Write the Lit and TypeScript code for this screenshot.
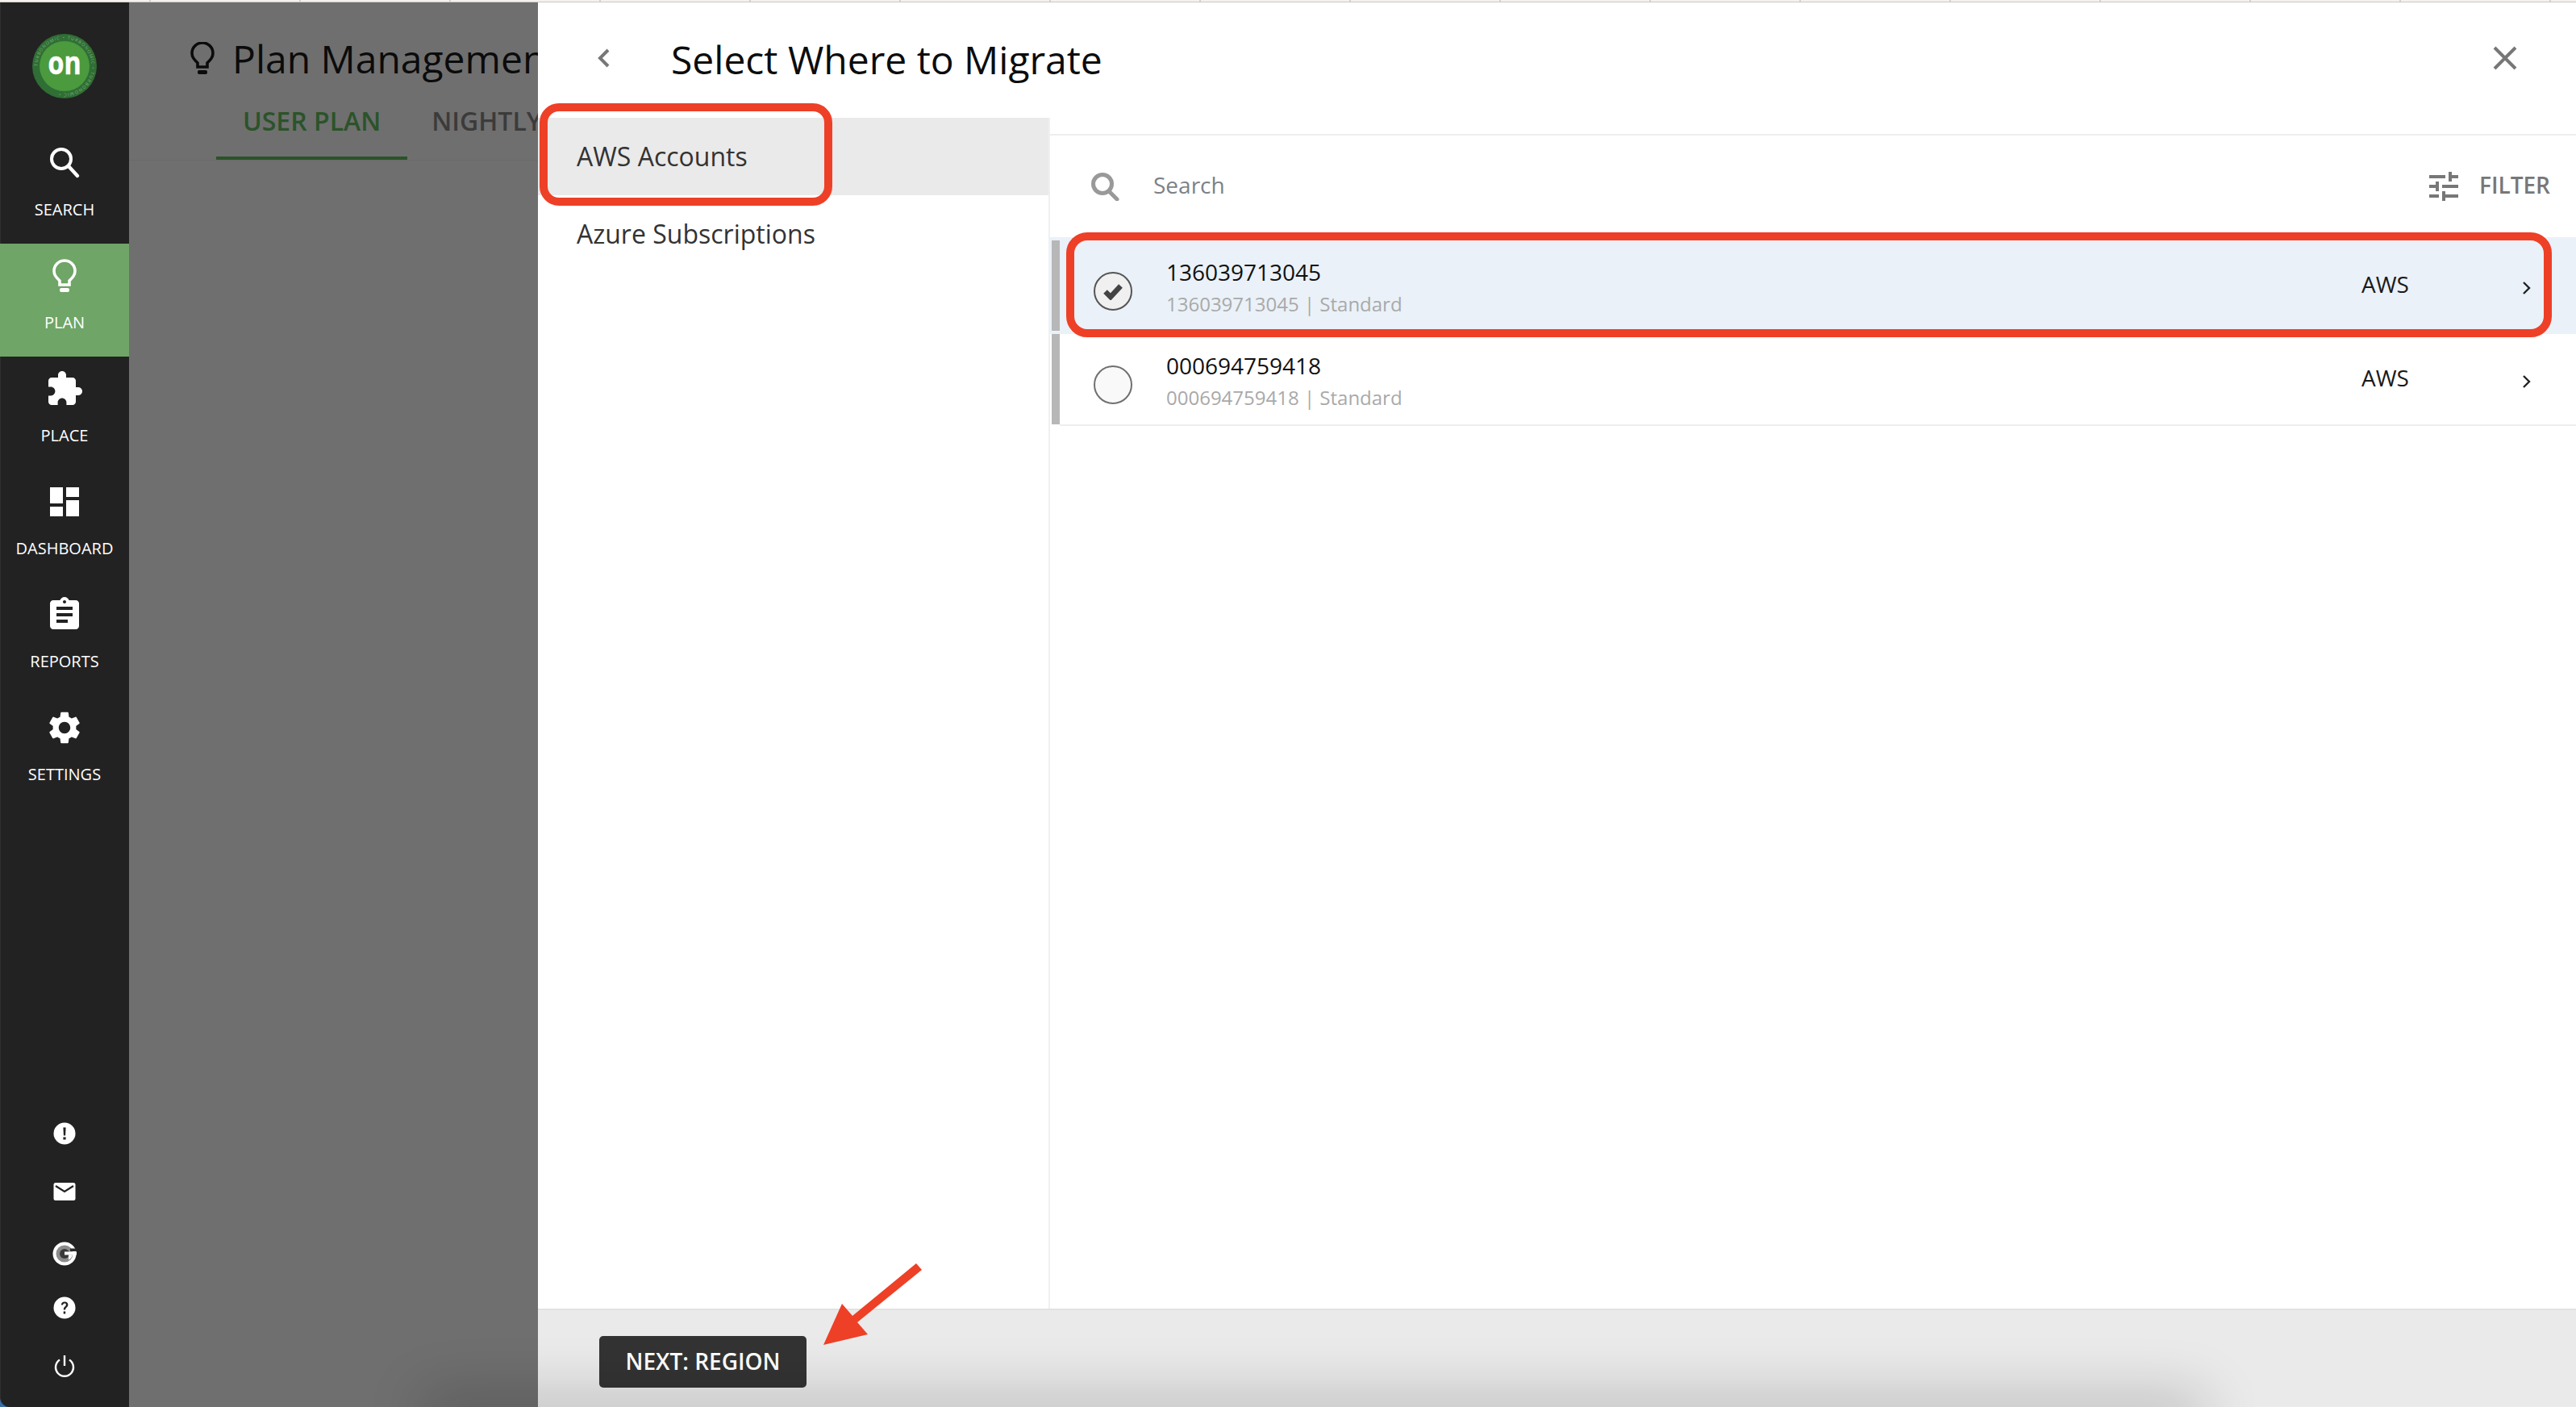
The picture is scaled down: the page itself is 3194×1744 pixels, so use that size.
import { LitElement, html, css, svg } from "lit";
import { customElement } from "lit/decorators.js";

const bulb = svg`<path d="M9 26C5 22 2 19 2 14A13 13 0 0 1 28 14C28 19 25 22 21 26V31H9Z" fill="none" stroke="currentColor" stroke-width="3.6"/><rect x="9" y="35" width="12" height="5" rx="2" fill="currentColor"/>`;

const NAV = [
  { label: "SEARCH", active: false, vb: "0 0 48 48", icon: svg`<circle cx="20" cy="19" r="12" fill="none" stroke="currentColor" stroke-width="4"/><path d="M29 28L40 40" stroke="currentColor" stroke-width="4.4" stroke-linecap="round"/>` },
  { label: "PLAN", active: true, vb: "-9 -4 48 48", icon: bulb },
  { label: "PLACE", active: false, vb: "0 0 24 24", icon: svg`<path fill="currentColor" d="M20.5 11H19V7c0-1.1-.9-2-2-2h-4V3.5C13 2.12 11.88 1 10.5 1S8 2.12 8 3.5V5H4c-1.1 0-1.99.9-1.99 2v3.8H3.5c1.49 0 2.7 1.21 2.7 2.7s-1.21 2.7-2.7 2.7H2V20c0 1.1.9 2 2 2h3.8v-1.5c0-1.49 1.21-2.7 2.7-2.7 1.49 0 2.7 1.21 2.7 2.7V22H17c1.1 0 2-.9 2-2v-4h1.5c1.38 0 2.5-1.12 2.5-2.5S21.88 11 20.5 11z"/>` },
  { label: "DASHBOARD", active: false, vb: "0 0 24 24", icon: svg`<path fill="currentColor" d="M3 13h8V3H3v10zm0 8h8v-6H3v6zm10 0h8V11h-8v10zm0-18v6h8V3h-8z"/>` },
  { label: "REPORTS", active: false, vb: "0 0 24 24", icon: svg`<path fill="currentColor" d="M19 3h-4.18C14.4 1.84 13.3 1 12 1c-1.3 0-2.4.84-2.82 2H5c-1.1 0-2 .9-2 2v14c0 1.1.9 2 2 2h14c1.1 0 2-.9 2-2V5c0-1.1-.9-2-2-2zm-7 0c.55 0 1 .45 1 1s-.45 1-1 1-1-.45-1-1 .45-1 1-1zm2 14H7v-2h7v2zm3-4H7v-2h10v2zm0-4H7V7h10v2z"/>` },
  { label: "SETTINGS", active: false, vb: "0 0 24 24", icon: svg`<path fill="currentColor" d="M19.14 12.94c.04-.3.06-.61.06-.94 0-.32-.02-.64-.07-.94l2.03-1.58c.18-.14.23-.41.12-.61l-1.92-3.32c-.12-.22-.37-.29-.59-.22l-2.39.96c-.5-.38-1.03-.7-1.62-.94l-.36-2.54c-.04-.24-.24-.41-.48-.41h-3.84c-.24 0-.43.17-.47.41l-.36 2.54c-.59.24-1.13.57-1.62.94l-2.39-.96c-.22-.08-.47 0-.59.22L2.74 8.87c-.12.21-.08.47.12.61l2.03 1.58c-.05.3-.09.63-.09.94s.02.64.07.94l-2.03 1.58c-.18.14-.23.41-.12.61l1.92 3.32c.12.22.37.29.59.22l2.39-.96c.5.38 1.03.7 1.62.94l.36 2.54c.05.24.24.41.48.41h3.84c.24 0 .44-.17.47-.41l.36-2.54c.59-.24 1.13-.56 1.62-.94l2.39.96c.22.08.47 0 .59-.22l1.92-3.32c.12-.22.07-.47-.12-.61l-2.01-1.58zM12 15.6c-1.98 0-3.6-1.62-3.6-3.6s1.62-3.6 3.6-3.6 3.6 1.62 3.6 3.6-1.62 3.6-3.6 3.6z"/>` },
];

const BOTTOM = [
  svg`<circle cx="15" cy="15" r="13.5" fill="#fff"/><path d="M13.4 7.5h3.2l-.5 10h-2.2zM13.4 19.5h3.2v3h-3.2z" fill="#222"/>`,
  svg`<rect x="1.5" y="4" width="27" height="22" rx="2.5" fill="#fff"/><path d="M4 8l11 7 11-7" fill="none" stroke="#222" stroke-width="2.2"/>`,
  svg`<circle cx="15" cy="15" r="14.5" fill="#fff"/><circle cx="15" cy="15" r="10.5" fill="#8c8c8c"/><circle cx="15" cy="15" r="6" fill="#3a3a3a"/><path d="M22 8.500h8v3.500h-8z" fill="#2a2a2a"/><path d="M15 12.500h15v4H15z" fill="#fff"/><path d="M20 16.500h5c-1 3-2.500 5-5 6z" fill="#fff"/>`,
  svg`<circle cx="15" cy="15" r="13.5" fill="#fff"/><path d="M10.800 11.600c.2-2.600 2-4 4.400-4 2.500 0 4.200 1.500 4.200 3.600 0 3.200-3.300 3.100-3.300 6.300h-2.300c0-4 3.100-4.100 3.100-6.200 0-1-.7-1.700-1.800-1.700-1.200 0-1.900.8-2 2zM13.700 19.600h2.500v2.800h-2.500z" fill="#222"/>`,
  svg`<path d="M9 7.500A11 11 0 1 0 21 7.500" fill="none" stroke="#fff" stroke-width="2.400"/><path d="M15 2v13" stroke="#fff" stroke-width="2.400"/>`,
];

const ROWS = [
  { id: "136039713045", selected: true },
  { id: "000694759418", selected: false },
];

@customElement("app-root")
export class AppRoot extends LitElement {
  static styles = css`
    :host { display: block; position: relative; width: 3194px; height: 1744px; overflow: hidden; font-family: "Open Sans", "Noto Sans", sans-serif; background: #3a6ea5; color: #111; }
    .topstrip { height: 3px; box-sizing: border-box; border-bottom: 1px solid #cdc8c3; background: repeating-linear-gradient(90deg, #f4f1ee 0 184px, #d6d2ce 184px 186px); background-position: 1px 0; }
    .shell { display: flex; height: 1741px; }
    .side { width: 160px; flex: none; box-sizing: border-box; background: #222; color: #fff; display: flex; flex-direction: column; border-left: 1px solid #303030; border-bottom-left-radius: 12px; }
    .logo { height: 159px; flex: none; display: flex; justify-content: center; padding-top: 38px; box-sizing: border-box; margin-left: -1px; }
    .logo svg { width: 82px; height: 82px; }
    .logo-on { font-family: "Open Sans", "Noto Sans", sans-serif; font-weight: 700; font-size: 40px; fill: #fff; stroke: #fff; stroke-width: .6px; }
    .logo-ring { font-family: "Open Sans", "Noto Sans", sans-serif; font-size: 5.500px; letter-spacing: 1.100px; fill: #7fae7a; }
    .nav { height: 140px; flex: none; display: flex; flex-direction: column; align-items: center; padding-top: 16px; box-sizing: border-box; margin-left: -1px; }
    .nav.active { background: #6fa566; }
    .nav svg { width: 48px; height: 48px; display: block; }
    .nav span { margin-top: 20px; font-size: 20px; line-height: 28px; white-space: nowrap; }
    .spacer { flex: 1; }
    .bottom { display: flex; flex-direction: column; align-items: center; margin-left: -1px; padding-bottom: 5px; }
    .bottom div { display: flex; align-items: center; }
    .bottom div:nth-child(1) { height: 72px; }
    .bottom div:nth-child(2) { height: 72px; }
    .bottom div:nth-child(3) { height: 82px; }
    .bottom div:nth-child(4) { height: 52px; }
    .bottom div:nth-child(5) { height: 92px; }
    .bottom svg { width: 30px; height: 30px; }
    .main { width: 507px; flex: none; overflow: hidden; background: #6f6f6f; box-sizing: border-box; }
    .page-title { display: flex; align-items: center; height: 92px; padding-left: 76px; padding-top: 46px; box-sizing: border-box; white-space: nowrap; font-size: 48px; color: #0b0b0b; }
    .page-title svg { width: 30px; height: 40px; margin-right: 22px; color: #0b0b0b; flex: none; }
    .tabs { display: flex; padding-left: 108px; height: 103px; align-items: flex-start; border-bottom: 1px solid #6a6a6a; white-space: nowrap; }
    .tab { font-size: 32px; font-weight: 600; height: 103px; line-height: 110px; box-sizing: border-box; color: #3b3b3b; }
    .tab.on { color: #2b5329; padding: 0 33px; border-bottom: 4px solid #2b5329; }
    .tab.first { margin-right: 30px; }
    .modal { flex: 1; min-width: 0; background: #fff; display: flex; flex-direction: column; }
    .mhead { height: 143px; flex: none; display: flex; align-items: center; padding: 0 72px 6px 73px; box-sizing: border-box; }
    .mhead .back { width: 18px; height: 26px; margin-right: 74px; flex: none; }
    .mhead h1 { margin: 4px 0 0; font-weight: 400; font-size: 48px; color: #0c0c0c; flex: 1; white-space: nowrap; }
    .mhead .close { width: 32px; height: 32px; flex: none; }
    .mbody { flex: 1; display: flex; min-height: 0; }
    .left { width: 633px; flex: none; border-right: 2px solid #f0f0f0; }
    .left div { height: 96px; line-height: 96px; padding-left: 48px; font-size: 32px; color: #333; }
    .left div.sel { background: #eaeaea; }
    .right { flex: 1; min-width: 0; padding-top: 20px; }
    .toolbar { height: 128px; box-sizing: border-box; border-top: 2px solid #eeeeee; display: flex; align-items: center; padding-left: 50px; }
    .toolbar .sicon { width: 36px; height: 36px; flex: none; margin-right: 42px; }
    .toolbar .ph { font-size: 28px; color: #7b8288; flex: 1; margin-bottom: 4px; }
    .toolbar .ficon { width: 48px; height: 48px; flex: none; margin-right: 20px; }
    .toolbar .flabel { font-size: 28px; font-weight: 600; color: #777; margin-right: 32px; margin-bottom: 4px; }
    .row { display: flex; align-items: center; height: 120px; box-sizing: border-box; }
    .row.sel { background: #eaf1f8; }
    .row.plain { height: 114px; }
    .bar { width: 10px; margin-left: 2px; align-self: stretch; background: #b7b7b7; flex: none; }
    .row.sel .bar { margin-top: 4px; margin-bottom: 4px; }
    .row.plain .bar { margin-bottom: 2px; }
    .row.plain .rbody { border-bottom: 2px solid #eeeeee; }
    .rbody { flex: 1; align-self: stretch; display: flex; align-items: center; }
    .radio { width: 48px; height: 48px; box-sizing: border-box; border-radius: 50%; border: 2px solid #707070; background: #f9f9f9; margin-left: 42px; margin-top: 14px; flex: none; display: flex; align-items: center; justify-content: center; }
    .row.sel .radio { background: #f0f0f0; border-color: #555; }
    .radio svg { width: 26px; height: 22px; }
    .txt { flex: 1; margin-left: 42px; margin-top: 4px; }
    .name { font-size: 28px; line-height: 38px; color: #111; }
    .sub { font-size: 24px; line-height: 36px; color: #a9a9a9; margin-top: 3px; white-space: pre; }
    .type { font-size: 28px; width: 200px; color: #1a1a1a; margin-bottom: 5px; }
    .chev { width: 9px; height: 16px; margin-right: 57px; margin-top: 6px; flex: none; overflow: visible; }
    .foot { height: 122px; flex: none; box-sizing: border-box; border-top: 2px solid #e2e2e2; background: #eaeaea; padding: 32px 0 0 76px; }
    .btn { width: 257px; height: 64px; box-sizing: border-box; background: #333; border-radius: 5px; color: #fff; font-size: 28px; font-weight: 600; padding-bottom: 2px; display: flex; align-items: center; justify-content: center; white-space: nowrap; }
    .shade { position: absolute; left: 540px; width: 2180px; top: 1744px; height: 20px; box-shadow: 0 0 70px 14px rgba(0,0,0,.22); pointer-events: none; }
    .mark { position: absolute; box-sizing: border-box; border: 10px solid #ee4027; pointer-events: none; }
    .mark.a { left: 669px; top: 128px; width: 363px; height: 127px; border-radius: 24px; }
    .mark.b { left: 1322px; top: 288px; width: 1842px; height: 130px; border-radius: 26px; }
    .arrow { position: absolute; left: 0; top: 0; width: 3194px; height: 1744px; pointer-events: none; }
  `;

  render() {
    return html`
      <div class="topstrip"></div>
      <div class="shell">
        <aside class="side">
          <div class="logo">
            <svg viewBox="0 0 82 82">
              <defs><path id="ringp" d="M41 41m-33.500 0a33.500 33.500 0 1 1 67 0a33.500 33.500 0 1 1 -67 0"></path></defs>
              <circle cx="41" cy="41" r="40" fill="#2f6e35"></circle>
              <circle cx="41" cy="41" r="31" fill="#4b9a3d"></circle>
              <text class="logo-ring"><textPath href="#ringp">TURBONOMIC • TURBONOMIC • TURBONOMIC •</textPath></text>
              <text class="logo-on" x="20.500" y="51" textLength="41" lengthAdjust="spacingAndGlyphs">on</text>
            </svg>
          </div>
          ${NAV.map(
            (n) => html`<div class="nav ${n.active ? "active" : ""}">
              <svg viewBox=${n.vb}>${n.icon}</svg><span>${n.label}</span>
            </div>`
          )}
          <div class="spacer"></div>
          <div class="bottom">
            ${BOTTOM.map((b) => html`<div><svg viewBox="0 0 30 30">${b}</svg></div>`)}
          </div>
        </aside>
        <section class="main">
          <div class="page-title"><svg viewBox="0 0 30 40">${bulb}</svg>Plan Management</div>
          <div class="tabs">
            <div class="tab on first">USER PLAN</div>
            <div class="tab">NIGHTLY PLAN</div>
          </div>
        </section>
        <section class="modal">
          <header class="mhead">
            <svg class="back" viewBox="0 0 18 26"><path d="M14 3L4 13l10 10" fill="none" stroke="#777" stroke-width="4"></path></svg>
            <h1>Select Where to Migrate</h1>
            <svg class="close" viewBox="0 0 32 32"><path d="M3 3l26 26M29 3L3 29" fill="none" stroke="#777" stroke-width="4"></path></svg>
          </header>
          <div class="mbody">
            <nav class="left">
              <div class="sel">AWS Accounts</div>
              <div>Azure Subscriptions</div>
            </nav>
            <div class="right">
              <div class="toolbar">
                <svg class="sicon" viewBox="0 0 36 36"><circle cx="15" cy="15" r="11.500" fill="none" stroke="#999" stroke-width="5"></circle><path d="M23 24l10 10" stroke="#999" stroke-width="5" stroke-linecap="round"></path></svg>
                <div class="ph">Search</div>
                <svg class="ficon" viewBox="0 0 24 24"><path fill="#777" d="M3 17v2h6v-2H3zM3 5v2h10V5H3zm10 16v-2h8v-2h-8v-2h-2v6h2zM7 9v2H3v2h4v2h2V9H7zm14 4v-2H11v2h10zm-6-4h2V7h4V5h-4V3h-2v6z"></path></svg>
                <div class="flabel">FILTER</div>
              </div>
              ${ROWS.map(
                (r) => html`<div class="row ${r.selected ? "sel" : "plain"}">
                  <div class="bar"></div>
                  <div class="rbody">
                    <div class="radio">
                      ${r.selected
                        ? html`<svg viewBox="0 0 26 22"><path d="M3.500 11.500l6.500 6.500L22.500 4.500" fill="none" stroke="#444" stroke-width="6.500"></path></svg>`
                        : ""}
                    </div>
                    <div class="txt">
                      <div class="name">${r.id}</div>
                      <div class="sub">${r.id} | Standard</div>
                    </div>
                    <div class="type">AWS</div>
                    <svg class="chev" viewBox="0 0 9 16"><path d="M1 1l7 7-7 7" fill="none" stroke="#222" stroke-width="2.400"></path></svg>
                  </div>
                </div>`
              )}
            </div>
          </div>
          <footer class="foot"><div class="btn">NEXT: REGION</div></footer>
        </section>
      </div>
      <div class="shade"></div>
      <div class="mark a"></div>
      <div class="mark b"></div>
      <svg class="arrow" viewBox="0 0 3194 1744"><path fill="#ee4027" d="M1021 1667L1044 1616L1057 1631L1136 1566L1143 1574L1063 1639L1076 1654Z"></path></svg>
    `;
  }
}
